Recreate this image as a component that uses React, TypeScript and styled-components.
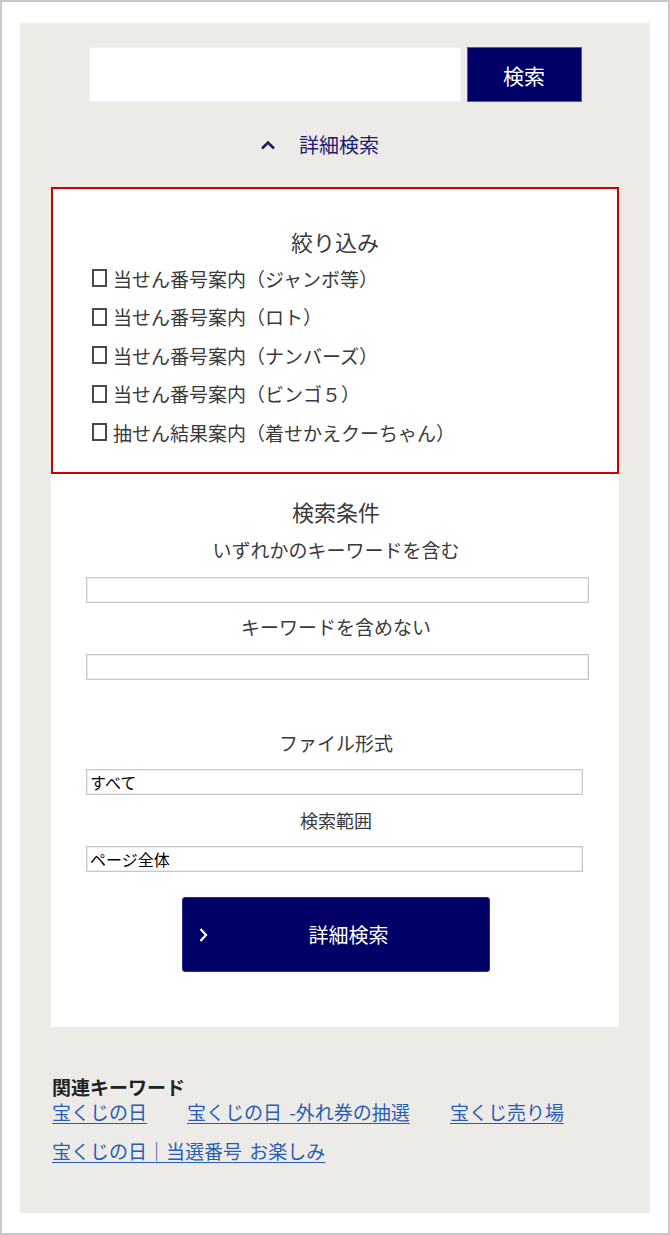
import styled, { createGlobalStyle } from 'styled-components';

const GlobalStyle = createGlobalStyle`
  html, body {
    margin: 0;
    padding: 0;
    background: #ffffff;
  }
  body {
    font-family: 'Noto Sans CJK JP', 'Noto Sans', sans-serif;
    color: #333333;
  }
  * {
    box-sizing: border-box;
  }
`;

const Frame = styled.div`
  width: 670px;
  height: 1235px;
  border: 2px solid #c8c8c8;
  background: #ffffff;
  padding: 21px 18px 20px 18px;
`;

const Panel = styled.div`
  height: 100%;
  background: #ecebe7;
  padding: 24px 31px 0 31px;
  display: flex;
  flex-direction: column;
`;

const SearchRow = styled.form`
  display: flex;
  justify-content: center;
  gap: 6px;
  height: 55px;
  margin: 0;
`;

const SearchInput = styled.input`
  width: 372px;
  height: 55px;
  border: 1px solid #f2f2f0;
  background: #ffffff;
  outline: none;
`;

const SearchButton = styled.button`
  width: 115px;
  height: 55px;
  border: 1px solid #5a5a8c;
  background: #000066;
  color: #ffffff;
  font-family: inherit;
  font-size: 21px;
  cursor: pointer;
`;

const Toggle = styled.div`
  display: flex;
  justify-content: center;
  align-items: center;
  gap: 23px;
  margin: 30px 0 29px;
  padding-right: 31px;
  height: 26px;
  color: #1c1c72;
  font-size: 20px;
  line-height: 26px;
`;

const Card = styled.div`
  background: #ffffff;
  display: flex;
  flex-direction: column;
`;

const FilterBox = styled.fieldset`
  margin: 0;
  border: 2px solid #cc0000;
  padding: 37px 0 21px 0;
  height: 287px;
  min-width: 0;
`;

const SectionTitle = styled.div`
  text-align: center;
  font-size: 22px;
  line-height: 30px;
  color: #3a3a3a;
`;

const FilterList = styled.div`
  margin-top: 3px;
  padding-left: 39px;
  display: flex;
  flex-direction: column;
`;

const FilterItem = styled.label`
  display: flex;
  align-items: center;
  height: 38.5px;
  font-size: 19px;
  color: #3a3a3a;
  cursor: pointer;
`;

const Box = styled.input`
  appearance: none;
  width: 15px;
  height: 18px;
  margin: 0 6px 0 0;
  border: 2px solid #4a4a4a;
  background: #ffffff;
  flex-shrink: 0;
  &:checked {
    background: #4a4a4a;
  }
`;

const Conditions = styled.div`
  padding: 22px 33px 55px 35px;
  display: flex;
  flex-direction: column;
`;

const Label = styled.div<{ $top: number; $size?: number }>`
  margin-top: ${(p) => p.$top}px;
  text-align: center;
  font-size: ${(p) => p.$size ?? 19}px;
  line-height: 28px;
  color: #3a3a3a;
`;

const TextField = styled.input<{ $top: number }>`
  margin-top: ${(p) => p.$top}px;
  width: 503px;
  height: 26px;
  border: 1px solid #c8c8c8;
  box-shadow: inset 0 0 0 1px #ececec;
  background: #ffffff;
  outline: none;
`;

const Select = styled.select<{ $top: number }>`
  margin-top: ${(p) => p.$top}px;
  width: 497px;
  height: 26px;
  border: 1px solid #c8c8c8;
  box-shadow: inset 0 0 0 1px #ececec;
  background: #ffffff;
  appearance: none;
  padding: 0 0 0 3px;
  font-family: inherit;
  font-size: 16px;
  line-height: 24px;
  color: #000000;
  border-radius: 0;
`;

const DetailButton = styled.button`
  align-self: center;
  margin-top: 25px;
  width: 308px;
  height: 75px;
  border: 1px solid #2a2a80;
  border-radius: 3px;
  background: #000066;
  color: #ffffff;
  display: flex;
  align-items: center;
  padding: 0 0 0 15px;
  font-family: inherit;
  font-size: 20px;
  cursor: pointer;
`;

const ButtonLabel = styled.span`
  flex: 1;
  text-align: center;
`;

const Related = styled.div`
  margin-top: 49px;
  padding-left: 1px;
`;

const RelatedTitle = styled.div`
  font-size: 19px;
  font-weight: 700;
  line-height: 21px;
  color: #222222;
`;

const LinkList = styled.div`
  display: flex;
  flex-wrap: wrap;
  column-gap: 40px;
  row-gap: 15px;
  margin-top: 3px;
`;

const KeywordLink = styled.a`
  font-size: 19px;
  line-height: 24px;
  color: #2a5cb3;
  text-decoration: underline;
  text-underline-offset: 3px;
  word-spacing: 3px;
`;

const ChevronUp = () => (
  <svg width="16" height="10" viewBox="0 0 16 10" aria-hidden="true">
    <path d="M2 8.5 L8 2.5 L14 8.5" fill="none" stroke="#1c1c5e" strokeWidth="2.6" />
  </svg>
);

const ChevronRight = () => (
  <svg width="10" height="16" viewBox="0 0 10 16" aria-hidden="true">
    <path d="M2.5 2 L8 8 L2.5 14" fill="none" stroke="#ffffff" strokeWidth="2.2" />
  </svg>
);

const filters = [
  '当せん番号案内（ジャンボ等）',
  '当せん番号案内（ロト）',
  '当せん番号案内（ナンバーズ）',
  '当せん番号案内（ビンゴ５）',
  '抽せん結果案内（着せかえクーちゃん）',
];

const keywords = [
  '宝くじの日',
  '宝くじの日 -外れ券の抽選',
  '宝くじ売り場',
  '宝くじの日｜当選番号 お楽しみ',
];

export default function App() {
  return (
    <>
      <GlobalStyle />
      <Frame>
        <Panel>
          <SearchRow onSubmit={(e) => e.preventDefault()}>
            <SearchInput type="text" aria-label="検索キーワード" />
            <SearchButton type="submit">検索</SearchButton>
          </SearchRow>

          <Toggle>
            <ChevronUp />
            <span>詳細検索</span>
          </Toggle>

          <Card>
            <FilterBox>
              <SectionTitle>絞り込み</SectionTitle>
              <FilterList>
                {filters.map((f) => (
                  <FilterItem key={f}>
                    <Box type="checkbox" />
                    {f}
                  </FilterItem>
                ))}
              </FilterList>
            </FilterBox>

            <Conditions>
              <SectionTitle>検索条件</SectionTitle>
              <Label $top={10}>いずれかのキーワードを含む</Label>
              <TextField $top={13} type="text" />
              <Label $top={10}>キーワードを含めない</Label>
              <TextField $top={13} type="text" />
              <Label $top={49}>ファイル形式</Label>
              <Select $top={12} defaultValue="all">
                <option value="all">すべて</option>
              </Select>
              <Label $top={11} $size={18}>検索範囲</Label>
              <Select $top={12} defaultValue="page">
                <option value="page">ページ全体</option>
              </Select>
              <DetailButton type="button">
                <ChevronRight />
                <ButtonLabel>詳細検索</ButtonLabel>
              </DetailButton>
            </Conditions>
          </Card>

          <Related>
            <RelatedTitle>関連キーワード</RelatedTitle>
            <LinkList>
              {keywords.map((k) => (
                <KeywordLink key={k} href="#">
                  {k}
                </KeywordLink>
              ))}
            </LinkList>
          </Related>
        </Panel>
      </Frame>
    </>
  );
}
